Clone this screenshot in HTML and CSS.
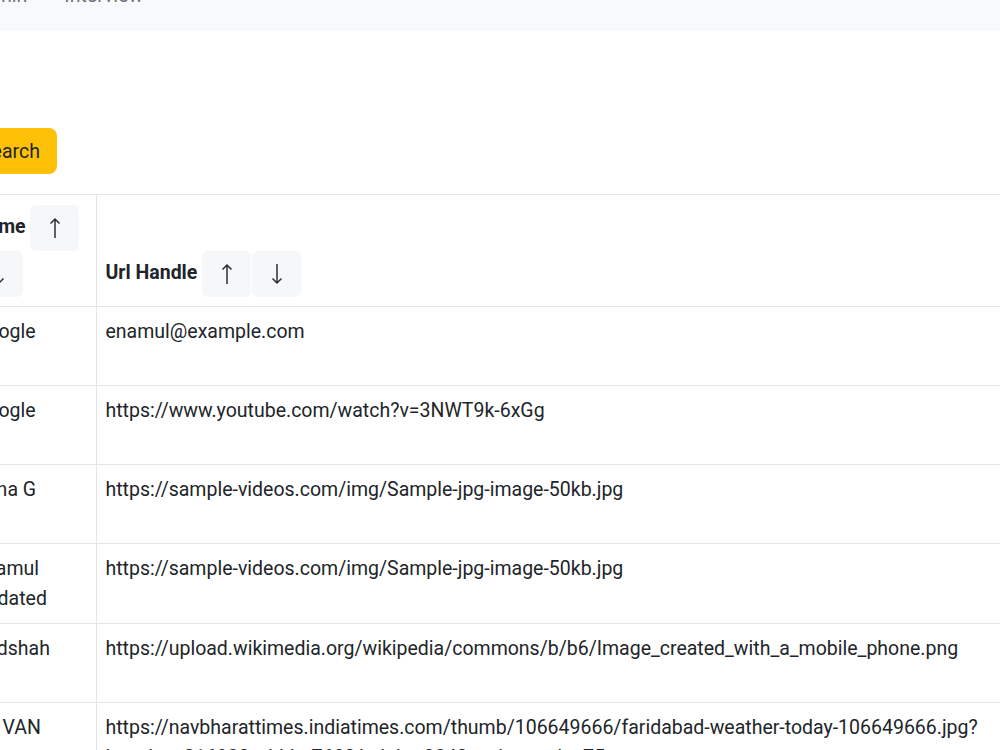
FILE: index.html
```html
<!DOCTYPE html>
<html lang="en">
<head>
    <meta charset="UTF-8">
    <meta name="viewport" content="width=device-width, initial-scale=1.0">
    <title>Url Handles</title>
    <link rel="stylesheet" href="styles.css">
</head>
<body>
    <div class="page">
        <!-- top navigation -->
        <nav class="topnav">
            <a href="#" class="nav-link">Admin</a>
            <a href="#" class="nav-link">Interview</a>
        </nav>

        <div class="content">
            <form class="search-form">
                <button type="button" class="btn-search">Search</button>
            </form>

            <table class="handles">
                <colgroup>
                    <col class="col-name">
                    <col class="col-url">
                </colgroup>
                <thead>
                    <tr>
                        <th>Name <button class="sort"><svg viewBox="0 0 14 22"><path d="M7 21V2M2.5 6.5L7 2l4.5 4.5"/></svg></button><button class="sort"><svg viewBox="0 0 14 22"><path d="M7 1v19M2.5 15.5L7 20l4.5-4.5"/></svg></button></th>
                        <th>Url Handle <button class="sort"><svg viewBox="0 0 14 22"><path d="M7 21V2M2.5 6.5L7 2l4.5 4.5"/></svg></button><button class="sort"><svg viewBox="0 0 14 22"><path d="M7 1v19M2.5 15.5L7 20l4.5-4.5"/></svg></button></th>
                    </tr>
                </thead>
                <tbody>
                    <tr>
                        <td>Google</td>
                        <td>enamul@example.com</td>
                    </tr>
                    <tr>
                        <td>Google</td>
                        <td>https://www.youtube.com/watch?v=3NWT9k-6xGg</td>
                    </tr>
                    <tr>
                        <td>Rana G</td>
                        <td>https://sample-videos.com/img/Sample-jpg-image-50kb.jpg</td>
                    </tr>
                    <tr>
                        <td>Enamul Updated</td>
                        <td>https://sample-videos.com/img/Sample-jpg-image-50kb.jpg</td>
                    </tr>
                    <tr>
                        <td>Badshah</td>
                        <td>https://upload.wikimedia.org/wikipedia/commons/b/b6/Image_created_with_a_mobile_phone.png</td>
                    </tr>
                    <tr>
                        <td>Mr VAN</td>
                        <td>https://navbharattimes.indiatimes.com/thumb/106649666/faridabad-weather-today-106649666.jpg?imgsize=216920,width=7680,height=3840,resizemode=75</td>
                    </tr>
                </tbody>
            </table>
        </div>
    </div>
</body>
</html>
```

FILE: styles.css
```css
* {
    margin: 0;
    padding: 0;
    box-sizing: border-box;
}

body {
    font-family: Roboto, "Liberation Sans", sans-serif;
    font-size: 19.5px;
    line-height: 30px;
    color: #212529;
    background: #fff;
    overflow: hidden;
}

/* the view is scrolled a little to the right and down */
.page {
    margin: -39px 0 0 -36px;
    width: 1200px;
}

.topnav {
    display: flex;
    gap: 37px;
    padding: 20px 0 20px 7px;
    background-color: #f8f9fa;
}

.nav-link {
    color: #6c757d;
    text-decoration: none;
}

.content {
    padding-top: 97px;
}

.search-form {
    margin-bottom: 20px;
}

.btn-search {
    font: inherit;
    color: #212529;
    background-color: #ffc107;
    border: none;
    border-radius: 8px;
    padding: 9px 17px 7px 16px;
}

.handles {
    width: 1180px;
    table-layout: fixed;
    border-collapse: collapse;
}

.col-name {
    width: 132px;
}

.handles th,
.handles td {
    padding: 10px 10px 9px 9px;
    text-align: left;
    border-top: 1px solid #e3e5e8;
    border-bottom: 1px solid #e3e5e8;
}

.handles th:first-child,
.handles td:first-child {
    padding-left: 10px;
    border-right: 1px solid #e3e5e8;
}

.handles th {
    vertical-align: bottom;
    font-weight: 700;
    color: #212529;
}

.handles td {
    vertical-align: top;
    height: 79px;
}

.sort {
    display: inline-flex;
    align-items: center;
    justify-content: center;
    vertical-align: middle;
    width: 49px;
    height: 46px;
    margin-right: 1px;
    border: none;
    border-radius: 6px;
    background-color: #f6f7f9;
}

.sort svg {
    width: 14px;
    height: 22px;
    fill: none;
    stroke: #2b2f33;
    stroke-width: 1.5;
}
```
